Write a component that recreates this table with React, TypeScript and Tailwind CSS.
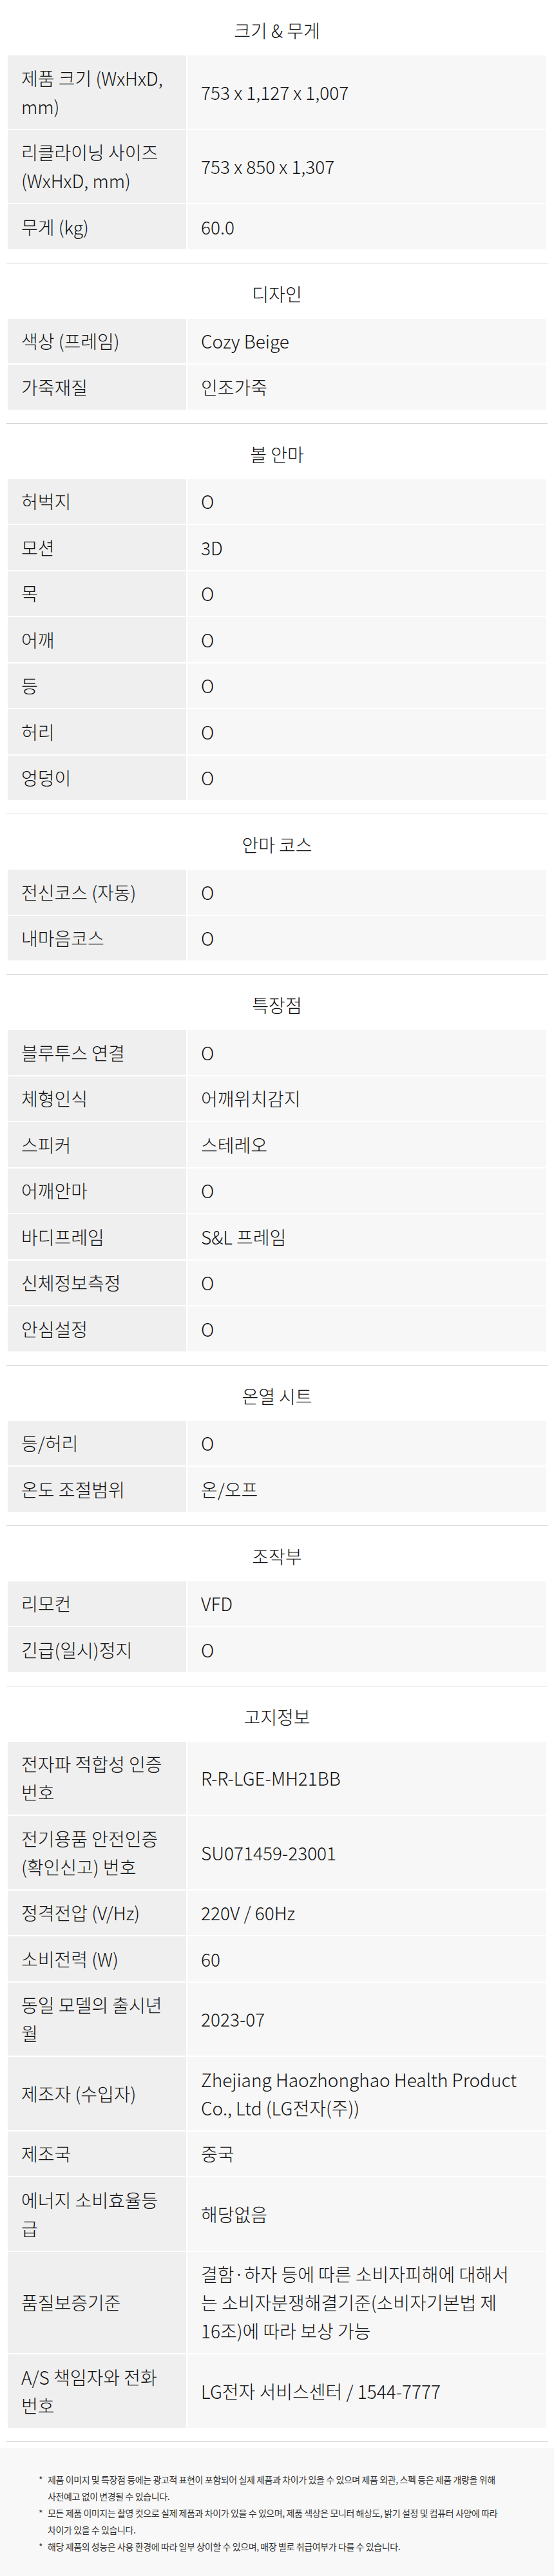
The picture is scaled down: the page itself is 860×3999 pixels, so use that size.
type Row = { label: string; value: string };
type Section = { title: string; rows: Row[] };

const sections: Section[] = [
  {
    title: "크기 & 무게",
    rows: [
      { label: "제품 크기 (WxHxD,\nmm)", value: "753 x 1,127 x 1,007" },
      { label: "리클라이닝 사이즈\n(WxHxD, mm)", value: "753 x 850 x 1,307" },
      { label: "무게 (kg)", value: "60.0" },
    ],
  },
  {
    title: "디자인",
    rows: [
      { label: "색상 (프레임)", value: "Cozy Beige" },
      { label: "가죽재질", value: "인조가죽" },
    ],
  },
  {
    title: "볼 안마",
    rows: [
      { label: "허벅지", value: "O" },
      { label: "모션", value: "3D" },
      { label: "목", value: "O" },
      { label: "어깨", value: "O" },
      { label: "등", value: "O" },
      { label: "허리", value: "O" },
      { label: "엉덩이", value: "O" },
    ],
  },
  {
    title: "안마 코스",
    rows: [
      { label: "전신코스 (자동)", value: "O" },
      { label: "내마음코스", value: "O" },
    ],
  },
  {
    title: "특장점",
    rows: [
      { label: "블루투스 연결", value: "O" },
      { label: "체형인식", value: "어깨위치감지" },
      { label: "스피커", value: "스테레오" },
      { label: "어깨안마", value: "O" },
      { label: "바디프레임", value: "S&L 프레임" },
      { label: "신체정보측정", value: "O" },
      { label: "안심설정", value: "O" },
    ],
  },
  {
    title: "온열 시트",
    rows: [
      { label: "등/허리", value: "O" },
      { label: "온도 조절범위", value: "온/오프" },
    ],
  },
  {
    title: "조작부",
    rows: [
      { label: "리모컨", value: "VFD" },
      { label: "긴급(일시)정지", value: "O" },
    ],
  },
  {
    title: "고지정보",
    rows: [
      { label: "전자파 적합성 인증\n번호", value: "R-R-LGE-MH21BB" },
      { label: "전기용품 안전인증\n(확인신고) 번호", value: "SU071459-23001" },
      { label: "정격전압 (V/Hz)", value: "220V / 60Hz" },
      { label: "소비전력 (W)", value: "60" },
      { label: "동일 모델의 출시년\n월", value: "2023-07" },
      {
        label: "제조자 (수입자)",
        value: "Zhejiang Haozhonghao Health Product\nCo., Ltd (LG전자(주))",
      },
      { label: "제조국", value: "중국" },
      { label: "에너지 소비효율등\n급", value: "해당없음" },
      {
        label: "품질보증기준",
        value:
          "결함·하자 등에 따른 소비자피해에 대해서\n는 소비자분쟁해결기준(소비자기본법 제\n16조)에 따라 보상 가능",
      },
      { label: "A/S 책임자와 전화\n번호", value: "LG전자 서비스센터 / 1544-7777" },
    ],
  },
];

const notes = [
  "제품 이미지 및 특장점 등에는 광고적 표현이 포함되어 실제 제품과 차이가 있을 수 있으며 제품 외관, 스펙 등은 제품 개량을 위해 사전예고 없이 변경될 수 있습니다.",
  "모든 제품 이미지는 촬영 컷으로 실제 제품과 차이가 있을 수 있으며, 제품 색상은 모니터 해상도, 밝기 설정 및 컴퓨터 사양에 따라 차이가 있을 수 있습니다.",
  "해당 제품의 성능은 사용 환경에 따라 일부 상이할 수 있으며, 매장 별로 취급여부가 다를 수 있습니다.",
];

const font = "font-['Noto_Sans_CJK_KR','Noto_Sans',sans-serif]";

const SpecSection = ({ section }: { section: Section }) => {
  return (
    <section className="border-b border-[#d6d6d6] pt-[26px] pb-[21px]">
      <h2 className="h-[42px] flex items-center justify-center text-[28px] font-light text-[#111]">
        {section.title}
      </h2>

      {/* TABLE */}
      <div className="mt-[18px] mx-[2px] grid grid-cols-[277px_1fr] gap-[2px]">
        {section.rows.map((row, index) => (
          <div key={index} className="contents">
            <div className="bg-[#efefef] px-[21px] py-[12.75px] flex items-center whitespace-pre-line text-[28px] leading-[44px] font-light text-[#111]">
              {row.label}
            </div>
            <div className="bg-[#f7f7f7] px-[21px] py-[12.75px] flex items-center whitespace-pre-line text-[28px] leading-[44px] font-light text-[#111]">
              {row.value}
            </div>
          </div>
        ))}
      </div>
    </section>
  );
};

export default function App() {
  return (
    <div className={`${font} bg-white w-[860px]`}>
      <div className="px-[10px]">
        {sections.map((section) => (
          <SpecSection key={section.title} section={section} />
        ))}
      </div>

      {/* NOTES */}
      <div className="mt-[9px] bg-[#f8f8f8] px-[60px] pt-[36px] pb-[40px]">
        <ul className="flex flex-col">
          {notes.map((note, index) => (
            <li
              key={index}
              className="flex flex-row text-[14px] leading-[26px] tracking-[-0.4px] text-[#333] break-keep"
            >
              <span className="w-[14px] shrink-0">*</span>
              <span>{note}</span>
            </li>
          ))}
        </ul>
      </div>
    </div>
  );
}
